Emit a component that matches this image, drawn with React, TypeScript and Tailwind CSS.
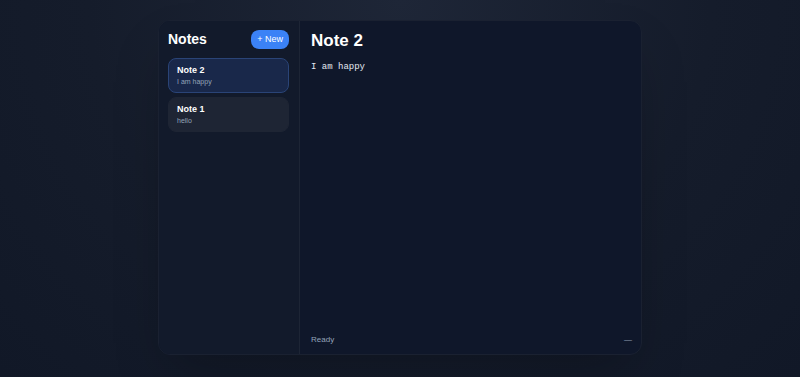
import { useState } from "react";

const notes = [
  { id: 2, title: "Note 2", body: "I am happy" },
  { id: 1, title: "Note 1", body: "hello" },
];

export default function App() {
  const [active, setActive] = useState(2);
  const current = notes.find((n) => n.id === active);

  return (
    <div
      className="h-[377px] w-[800px] overflow-hidden px-[158px] pt-5 pb-[22px] bg-[radial-gradient(ellipse_at_top,#1f2738_0%,#151c2b_55%,#111827_100%)]"
      style={{ fontFamily: '"Liberation Sans", Arial, sans-serif' }}
    >
      <div className="flex h-full overflow-hidden rounded-xl border border-[#1a2131] bg-[#0f172a] shadow-2xl">
        {/* SIDEBAR */}
        <aside className="flex w-[141px] flex-col border-r border-[#1d2535] bg-[#121a2b] pl-[9px] pr-[10px] pt-[8px]">
          <div className="mb-[8px] flex items-center justify-between">
            <h1 className="text-[14px] font-bold text-white">Notes</h1>
            <button className="h-[19px] rounded-lg bg-[#3b82f6] px-[6px] text-[9px] leading-[19px] text-white">
              + New
            </button>
          </div>

          <div className="flex flex-col gap-[4px]">
            {notes.map((n) => (
              <button
                key={n.id}
                onClick={() => setActive(n.id)}
                className={
                  n.id === active
                    ? "rounded-lg border border-[#2a4477] bg-[#19284a] px-[8px] pt-[6px] pb-[6px] text-left"
                    : "rounded-lg border border-[#1e2534] bg-[#1e2534] px-[8px] pt-[6px] pb-[6px] text-left"
                }
              >
                <div className="text-[9px] font-bold leading-[11px] text-white">{n.title}</div>
                <div className="mt-[1px] text-[7px] leading-[9px] text-[#94a3b8]">{n.body}</div>
              </button>
            ))}
          </div>
        </aside>

        {/* EDITOR */}
        <main className="flex flex-1 flex-col pl-[11px] pr-[9px] pt-[9px] pb-[8px]">
          <h2 className="text-[17px] font-bold leading-[22px] text-white">{current?.title}</h2>
          <div
            className="mt-[9px] flex-1 text-[9px] text-[#e2e8f0]"
            style={{ fontFamily: '"Liberation Mono", "Courier New", monospace' }}
          >
            {current?.body}
          </div>
          <div className="flex items-center justify-between text-[8px] text-[#94a3b8]">
            <span>Ready</span>
            <span>—</span>
          </div>
        </main>
      </div>
    </div>
  );
}
